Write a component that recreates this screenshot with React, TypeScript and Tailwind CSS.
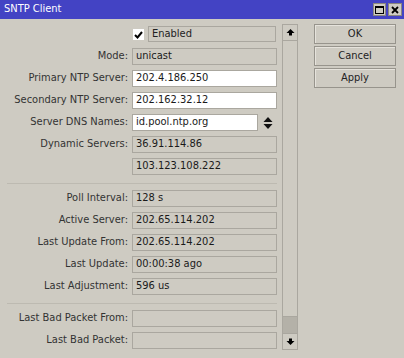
import React from 'react';

const font = { fontFamily: '"DejaVu Sans Condensed", "DejaVu Sans", sans-serif' };

type Row =
  | { kind: 'field'; label: string; value: string; editable?: boolean; dns?: boolean }
  | { kind: 'sep' };

const rows: Row[] = [
  { kind: 'field', label: 'Mode:', value: 'unicast' },
  { kind: 'field', label: 'Primary NTP Server:', value: '202.4.186.250', editable: true },
  { kind: 'field', label: 'Secondary NTP Server:', value: '202.162.32.12', editable: true },
  { kind: 'field', label: 'Server DNS Names:', value: 'id.pool.ntp.org', editable: true, dns: true },
  { kind: 'field', label: 'Dynamic Servers:', value: '36.91.114.86' },
  { kind: 'field', label: '', value: '103.123.108.222' },
  { kind: 'sep' },
  { kind: 'field', label: 'Poll Interval:', value: '128 s' },
  { kind: 'field', label: 'Active Server:', value: '202.65.114.202' },
  { kind: 'field', label: 'Last Update From:', value: '202.65.114.202' },
  { kind: 'field', label: 'Last Update:', value: '00:00:38 ago' },
  { kind: 'field', label: 'Last Adjustment:', value: '596 us' },
  { kind: 'sep' },
  { kind: 'field', label: 'Last Bad Packet From:', value: '' },
  { kind: 'field', label: 'Last Bad Packet:', value: '' },
];

function Arrow({ down = false }: { down?: boolean }) {
  return (
    <svg width="9" height="7" viewBox="0 0 9 7" className={down ? 'rotate-180' : ''}>
      <path d="M4.5 0 L8.5 4 L6 4 L6 6.5 L3 6.5 L3 4 L0.5 4 Z" fill="#000" />
    </svg>
  );
}

function UpDown() {
  return (
    <svg width="10" height="12" viewBox="0 0 10 12">
      <path d="M5 0 L9.5 5 L0.5 5 Z" fill="#111" />
      <path d="M5 12 L9.5 7 L0.5 7 Z" fill="#111" />
    </svg>
  );
}

function Button({ label }: { label: string }) {
  return (
    <div className="h-[20px] w-[82px] border border-[#97948c] shadow-[inset_1px_1px_0_#e6e3dc] flex items-center justify-center text-[11px] text-[#222]">
      {label}
    </div>
  );
}

export default function App() {
  return (
    <div className="w-[404px] h-[358px] bg-[#cecbc2] flex flex-col overflow-hidden" style={font}>
      <div className="h-[19px] bg-[#4343c4] flex items-center pl-[4px] pr-[2px] shrink-0">
        <span className="text-white text-[11px] flex-1">SNTP Client</span>
        <div className="flex gap-[2px]">
          <div className="w-[13px] h-[13px] bg-[#cfccc4] border border-[#8a877f] flex items-center justify-center">
            <div className="w-[9px] h-[8px] border border-black border-t-2" />
          </div>
          <div className="w-[14px] h-[13px] bg-[#cfccc4] border border-[#8a877f] flex items-center justify-center">
            <svg width="8" height="8" viewBox="0 0 8 8">
              <path d="M1 1 L7 7 M7 1 L1 7" stroke="#000" strokeWidth="1.8" />
            </svg>
          </div>
        </div>
      </div>

      <div className="flex flex-1">
        <div className="w-[280px] pt-[7px] flex flex-col">
          <div className="h-[22px] flex items-start">
            <div className="ml-[133px] mt-[3px] w-[11px] h-[11px] bg-white flex items-center justify-center">
              <svg width="9" height="8" viewBox="0 0 9 8">
                <path d="M1 4 L3.5 6.5 L8 1" stroke="#000" strokeWidth="2" fill="none" />
              </svg>
            </div>
            <div className="ml-[4px] w-[128px] h-[16px] border border-[#aaa79f] flex items-center px-[3px] text-[11px] text-[#222]">
              Enabled
            </div>
          </div>
          {rows.map((r, i) =>
            r.kind === 'sep' ? (
              <div key={i} className="ml-[7px] w-[270px] h-0 border-t border-[#bdbab1] mt-[3px] mb-[6px]" />
            ) : (
              <div key={i} className="h-[22px] flex items-start">
                <div className="w-[128px] h-[17px] flex items-center justify-end text-[11px] text-[#333] whitespace-nowrap">
                  {r.label}
                </div>
                <div
                  className={`ml-[4px] h-[17px] border border-[#aaa79f] flex items-center px-[3px] text-[11px] text-[#1a1a1a] whitespace-nowrap ${
                    r.editable ? 'bg-white' : ''
                  } ${r.dns ? 'w-[126px]' : 'w-[145px]'}`}
                >
                  {r.value}
                </div>
                {r.dns && (
                  <div className="w-[19px] h-[17px] flex items-center justify-center">
                    <UpDown />
                  </div>
                )}
              </div>
            )
          )}
        </div>

        <div className="ml-[2px] mt-[5px] mb-[8px] w-[16px] border border-[#aaa79f] flex flex-col">
          <div className="h-[16px] border-b border-[#aaa79f] flex items-center justify-center">
            <Arrow />
          </div>
          <div className="flex-1" />
          <div className="h-[17px] bg-[#b4b1a8] border-t border-[#aaa79f]" />
          <div className="h-[16px] border-t border-[#aaa79f] flex items-center justify-center">
            <Arrow down />
          </div>
        </div>

        <div className="ml-[16px] pt-[5px] flex flex-col gap-[2px]">
          <Button label="OK" />
          <Button label="Cancel" />
          <Button label="Apply" />
        </div>
      </div>
    </div>
  );
}
